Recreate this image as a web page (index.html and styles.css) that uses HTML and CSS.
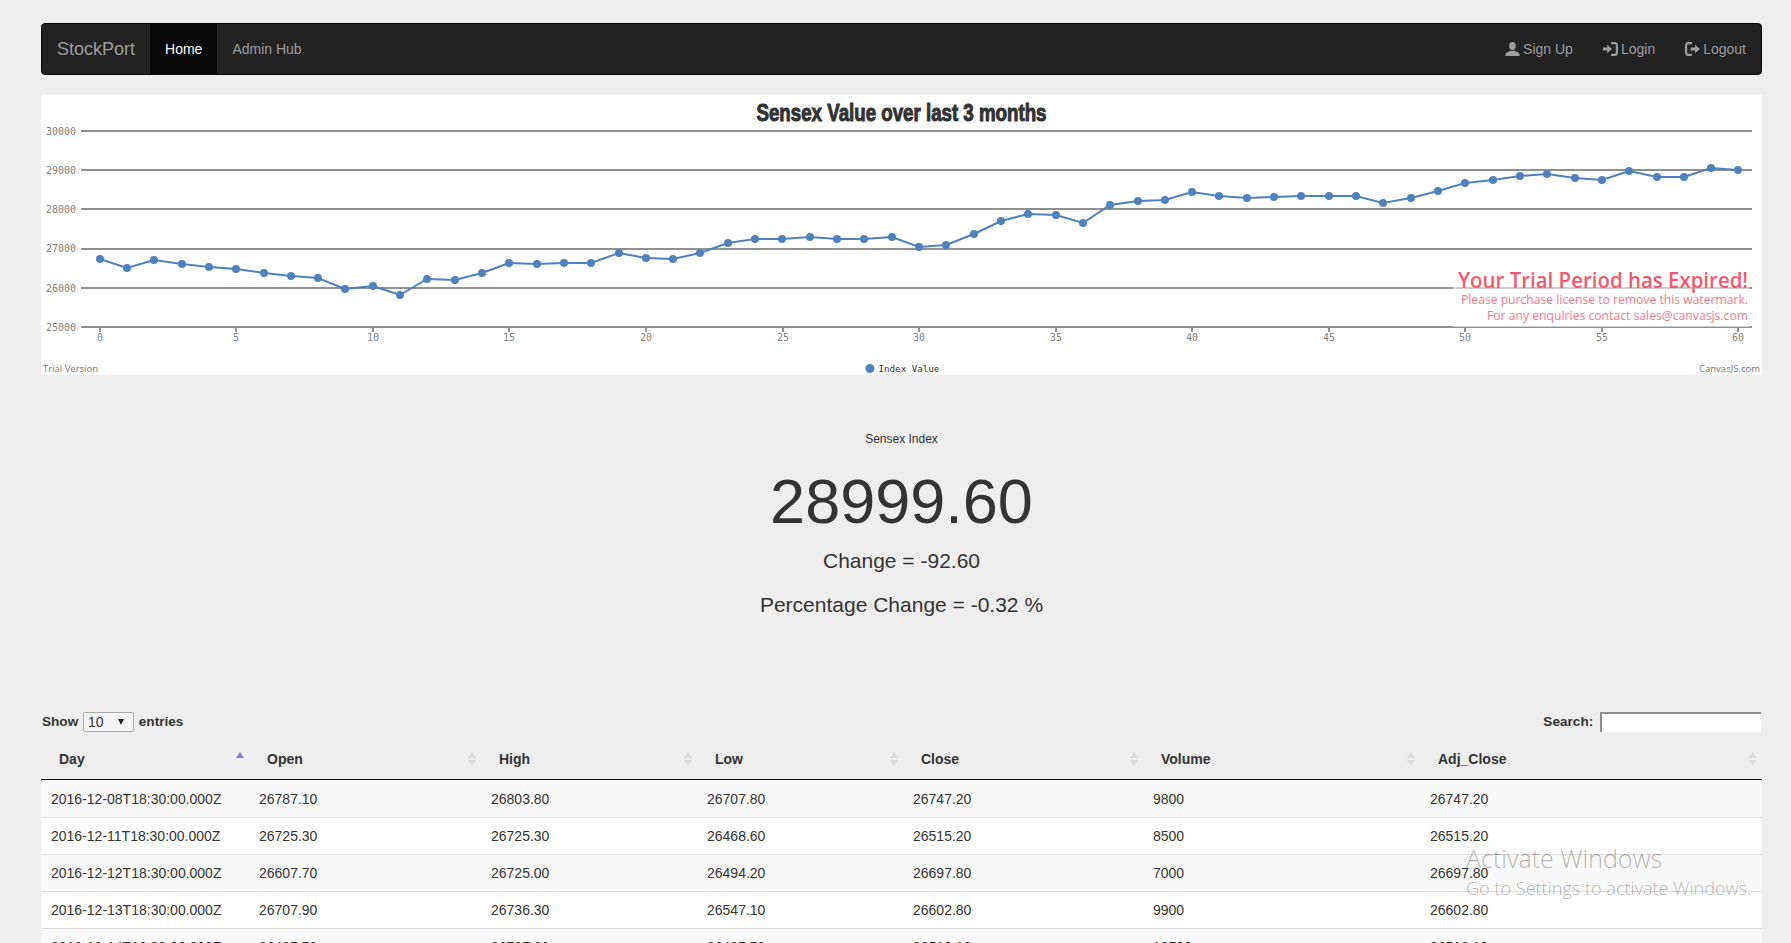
FILE: index.html
```html
<!DOCTYPE html>
<html lang="en">
<head>
    <meta charset="UTF-8">
    <meta name="viewport" content="width=device-width, initial-scale=1.0">
    <title>StockPort</title>
    <link rel="stylesheet" href="styles.css">
</head>
<body>
    <nav class="navbar">
        <a class="brand">StockPort</a>
        <ul class="nav">
            <li><a class="active">Home</a></li>
            <li><a>Admin Hub</a></li>
        </ul>
        <ul class="nav nav-right">
            <li><a><svg class="icon" viewBox="0 0 15 14"><ellipse cx="7.5" cy="4" rx="3.3" ry="4"/><path d="M0.5 14v-1.6c0-2.2 3.6-2.4 4.8-3.6h4.4c1.2 1.2 4.8 1.4 4.8 3.6V14z"/></svg>Sign Up</a></li>
            <li><a><svg class="icon" viewBox="0 0 15 14"><path d="M0 5.4h4.2V2.8L9 7l-4.8 4.2V8.6H0z"/><path class="icon-line" d="M8 1.2h3.5c1.5 0 2.4.9 2.4 2.4v6.8c0 1.5-.9 2.4-2.4 2.4H8"/></svg>Login</a></li>
            <li><a><svg class="icon" viewBox="0 0 15 14"><path class="icon-line" d="M7 1.2H3.5C2 1.2 1.1 2.1 1.1 3.6v6.8c0 1.5.9 2.4 2.4 2.4H7"/><path d="M5.5 5.4H10V2.8L15 7l-5 4.2V8.6H5.5z"/></svg>Logout</a></li>
        </ul>
    </nav>

    <!-- chart, drawn in page coordinates -->
    <div class="chart">
        <svg viewBox="41 95 1721 280" width="1721" height="280">
            <text class="chart-title" x="901.5" y="121" text-anchor="middle" textLength="290" lengthAdjust="spacingAndGlyphs">Sensex Value over last 3 months</text>

            <g class="grid">
                <line x1="81" y1="131" x2="1752" y2="131"/>
                <line x1="81" y1="170" x2="1752" y2="170"/>
                <line x1="81" y1="209" x2="1752" y2="209"/>
                <line x1="81" y1="249" x2="1752" y2="249"/>
                <line x1="81" y1="288" x2="1752" y2="288"/>
                <line x1="81" y1="327" x2="1752" y2="327"/>
            </g>
            <g class="grid ticks">
                <line x1="100" y1="327" x2="100" y2="332"/>
                <line x1="236" y1="327" x2="236" y2="332"/>
                <line x1="373" y1="327" x2="373" y2="332"/>
                <line x1="509" y1="327" x2="509" y2="332"/>
                <line x1="646" y1="327" x2="646" y2="332"/>
                <line x1="783" y1="327" x2="783" y2="332"/>
                <line x1="919" y1="327" x2="919" y2="332"/>
                <line x1="1056" y1="327" x2="1056" y2="332"/>
                <line x1="1192" y1="327" x2="1192" y2="332"/>
                <line x1="1329" y1="327" x2="1329" y2="332"/>
                <line x1="1465" y1="327" x2="1465" y2="332"/>
                <line x1="1602" y1="327" x2="1602" y2="332"/>
                <line x1="1738" y1="327" x2="1738" y2="332"/>
            </g>

            <g class="axis-label" text-anchor="end">
                <text x="76" y="134.5">30000</text>
                <text x="76" y="173.5">29000</text>
                <text x="76" y="212.5">28000</text>
                <text x="76" y="252">27000</text>
                <text x="76" y="291.5">26000</text>
                <text x="76" y="330.5">25000</text>
            </g>
            <g class="axis-label" text-anchor="middle">
                <text x="100" y="341">0</text>
                <text x="236" y="341">5</text>
                <text x="373" y="341">10</text>
                <text x="509" y="341">15</text>
                <text x="646" y="341">20</text>
                <text x="783" y="341">25</text>
                <text x="919" y="341">30</text>
                <text x="1056" y="341">35</text>
                <text x="1192" y="341">40</text>
                <text x="1329" y="341">45</text>
                <text x="1465" y="341">50</text>
                <text x="1602" y="341">55</text>
                <text x="1738" y="341">60</text>
            </g>

            <polyline class="series" points="100,259 127,268 154,260 182,264 209,267 236,269 264,273 291,276 318,278 345,289 373,286 400,295 427,279 455,280 482,273 509,263 537,264 564,263 591,263 619,253 646,258 673,259 700,253 728,243 755,239 782,239 810,237 837,239 864,239 892,237 919,247 946,245 974,234 1001,221 1028,214 1056,215 1083,223 1110,205 1138,201 1165,200 1192,192 1219,196 1247,198 1274,197 1301,196 1329,196 1356,196 1383,203 1411,198 1438,191 1465,183 1493,180 1520,176 1547,174 1575,178 1602,180 1629,171 1657,177 1684,177 1711,168 1738,170"/>
            <path class="markers" d="M100 259h0M127 268h0M154 260h0M182 264h0M209 267h0M236 269h0M264 273h0M291 276h0M318 278h0M345 289h0M373 286h0M400 295h0M427 279h0M455 280h0M482 273h0M509 263h0M537 264h0M564 263h0M591 263h0M619 253h0M646 258h0M673 259h0M700 253h0M728 243h0M755 239h0M782 239h0M810 237h0M837 239h0M864 239h0M892 237h0M919 247h0M946 245h0M974 234h0M1001 221h0M1028 214h0M1056 215h0M1083 223h0M1110 205h0M1138 201h0M1165 200h0M1192 192h0M1219 196h0M1247 198h0M1274 197h0M1301 196h0M1329 196h0M1356 196h0M1383 203h0M1411 198h0M1438 191h0M1465 183h0M1493 180h0M1520 176h0M1547 174h0M1575 178h0M1602 180h0M1629 171h0M1657 177h0M1684 177h0M1711 168h0M1738 170h0"/>

            <rect class="wm-back" x="1453" y="262" width="297" height="65"/>
            <g class="wm" text-anchor="end">
                <text class="wm-head" x="1748" y="288" textLength="290" lengthAdjust="spacingAndGlyphs">Your Trial Period has Expired!</text>
                <text x="1748" y="304" textLength="287" lengthAdjust="spacingAndGlyphs">Please purchase license to remove this watermark.</text>
                <text x="1748" y="320" textLength="261" lengthAdjust="spacingAndGlyphs">For any enquiries contact sales@canvasjs.com</text>
            </g>

            <text class="credit" x="43" y="372">Trial Version</text>
            <text class="credit" x="1760" y="372" text-anchor="end">CanvasJS.com</text>
            <circle class="legend-dot" cx="870" cy="368.5" r="4.5"/>
            <text class="legend" x="878.5" y="371.5">Index Value</text>
        </svg>
    </div>

    <div class="stats">
        <div class="stats-label">Sensex Index</div>
        <div class="stats-value">28999.60</div>
        <div class="stats-line">Change = -92.60</div>
        <div class="stats-line stats-pct">Percentage Change = -0.32 %</div>
    </div>

    <div class="table-tools">
        <label>Show <span class="select-wrap"><select><option>10</option></select></span> entries</label>
        <label>Search: <input type="text"></label>
    </div>
    <table class="stock-table">
        <colgroup>
            <col class="c-day"><col class="c-open"><col class="c-high"><col class="c-low"><col class="c-close"><col class="c-vol"><col class="c-adj">
        </colgroup>
        <thead>
            <tr>
                <th class="sort-asc">Day</th>
                <th>Open</th>
                <th>High</th>
                <th>Low</th>
                <th>Close</th>
                <th>Volume</th>
                <th>Adj_Close</th>
            </tr>
        </thead>
        <tbody>
            <tr><td>2016-12-08T18:30:00.000Z</td><td>26787.10</td><td>26803.80</td><td>26707.80</td><td>26747.20</td><td>9800</td><td>26747.20</td></tr>
            <tr><td>2016-12-11T18:30:00.000Z</td><td>26725.30</td><td>26725.30</td><td>26468.60</td><td>26515.20</td><td>8500</td><td>26515.20</td></tr>
            <tr><td>2016-12-12T18:30:00.000Z</td><td>26607.70</td><td>26725.00</td><td>26494.20</td><td>26697.80</td><td>7000</td><td>26697.80</td></tr>
            <tr><td>2016-12-13T18:30:00.000Z</td><td>26707.90</td><td>26736.30</td><td>26547.10</td><td>26602.80</td><td>9900</td><td>26602.80</td></tr>
            <tr><td>2016-12-14T18:30:00.000Z</td><td>26497.70</td><td>26707.60</td><td>26497.70</td><td>26519.10</td><td>10700</td><td>26519.10</td></tr>
        </tbody>
    </table>

    <div class="activate">
        <div class="activate-head">Activate Windows</div>
        <div class="activate-sub">Go to Settings to activate Windows.</div>
    </div>
</body>
</html>
```

FILE: styles.css
```css
html, body {
    height: 943px;
    overflow: hidden;
}

body {
    margin: 0;
    padding: 23px 29px 0 41px;
    box-sizing: border-box;
    position: relative;
    background: #eeeeee;
    color: #333;
    font-family: "Liberation Sans", Arial, sans-serif;
    font-size: 14px;
    line-height: 20px;
}

/* Navbar */
.navbar {
    display: flex;
    height: 52px;
    box-sizing: border-box;
    margin-bottom: 20px;
    background: #222;
    border: 1px solid #080808;
    border-radius: 4px;
}

.brand {
    padding: 15px;
    font-size: 18px;
    color: #9d9d9d;
}

.nav {
    display: flex;
    margin: 0;
    padding: 0;
    list-style: none;
}

.nav-right {
    margin-left: auto;
}

.nav a {
    display: block;
    height: 50px;
    box-sizing: border-box;
    padding: 15px;
    color: #9d9d9d;
}

.nav a.active {
    background: #080808;
    color: #fff;
}

.icon {
    width: 15px;
    height: 14px;
    margin-right: 3px;
    vertical-align: -2px;
    fill: #9d9d9d;
}

.icon-line {
    fill: none;
    stroke: #9d9d9d;
    stroke-width: 2.2;
}

/* Chart */
.chart {
    height: 280px;
    background: #fff;
}

.chart svg {
    display: block;
}

.chart-title {
    font-family: "Liberation Sans Narrow", "Liberation Sans", sans-serif;
    font-size: 23px;
    font-weight: bold;
    fill: #333;
    stroke: #333;
    stroke-width: 1;
}

.grid line {
    stroke: #909090;
    stroke-width: 2;
}

.axis-label {
    font-family: "DejaVu Sans Mono", monospace;
    font-size: 10px;
    fill: #808080;
}

.series {
    fill: none;
    stroke: #4f81bc;
    stroke-width: 2;
}

.markers {
    fill: none;
    stroke: #4f81bc;
    stroke-width: 8;
    stroke-linecap: round;
}

.wm-back {
    fill: rgba(255, 255, 255, 0.55);
}

.wm {
    font-family: "Open Sans", sans-serif;
    font-size: 12px;
    fill: #f4788a;
}

.wm-head {
    font-size: 21px;
    font-weight: 600;
    fill: #f05a70;
}

.credit {
    font-family: "Open Sans", sans-serif;
    font-size: 9.5px;
    fill: #777;
}

.legend-dot {
    fill: #4f81bc;
}

.legend {
    font-family: "DejaVu Sans Mono", monospace;
    font-size: 9.2px;
    fill: #333;
}

/* Index figures */
.stats {
    margin-top: 56px;
    text-align: center;
}

.stats-label {
    font-size: 12px;
    line-height: 17px;
}

.stats-value {
    margin-top: 19px;
    font-size: 63px;
    line-height: 68px;
}

.stats-line {
    margin-top: 12px;
    font-size: 21px;
    line-height: 28px;
}

.stats-pct {
    margin-top: 16px;
}

/* Table */
.table-tools {
    display: flex;
    justify-content: space-between;
    height: 20px;
    margin-top: 93px;
    padding: 0 1px;
    margin-bottom: 7px;
    font-weight: bold;
    font-size: 13.6px;
}

.select-wrap {
    position: relative;
    display: inline-block;
    vertical-align: top;
}

.select-wrap::after {
    content: "";
    position: absolute;
    left: 36px;
    top: 7px;
    border-left: 3.5px solid transparent;
    border-right: 3.5px solid transparent;
    border-top: 6px solid #222;
}

.table-tools select {
    appearance: none;
    display: block;
    width: 51px;
    height: 20px;
    margin: 0 1px;
    padding: 0 0 0 4px;
    box-sizing: border-box;
    background: #f4f4f4;
    border: 1px solid #a9a9a9;
    border-radius: 2px;
    color: #333;
    font-family: "Liberation Sans", Arial, sans-serif;
    font-size: 14px;
}

.table-tools input {
    width: 161px;
    height: 20px;
    margin-left: 3px;
    padding: 0;
    box-sizing: border-box;
    background: #fff;
    border: 0 solid #8f8f8f;
    border-top-width: 2px;
    border-left-width: 2px;
    vertical-align: top;
}

.stock-table {
    width: 100%;
    table-layout: fixed;
    border-collapse: separate;
    border-spacing: 0;
}

.c-day { width: 208px; }
.c-open { width: 232px; }
.c-high { width: 216px; }
.c-low { width: 206px; }
.c-close { width: 240px; }
.c-vol { width: 277px; }
.c-adj { width: 342px; }

.stock-table th {
    position: relative;
    padding: 10px 18px;
    border-bottom: 1px solid #111;
    text-align: left;
}

/* sort arrows */
.stock-table th::before,
.stock-table th::after {
    content: "";
    position: absolute;
    right: 5px;
    border-left: 4px solid transparent;
    border-right: 4px solid transparent;
}

.stock-table th::before {
    top: 13px;
    border-bottom: 6px solid #dcdcdc;
}

.stock-table th::after {
    top: 21px;
    border-top: 6px solid #dcdcdc;
}

.stock-table th.sort-asc::before {
    border-bottom-color: #7c7cd8;
}

.stock-table th.sort-asc::after {
    display: none;
}

.stock-table td {
    padding: 8px 10px;
    border-top: 1px solid #ddd;
    background: #fff;
}

.stock-table tbody tr:nth-child(odd) td {
    background: #f9f9f9;
}

.stock-table tbody tr:first-child td {
    border-top-color: #f9f9f9;
}

/* Windows watermark */
.activate {
    position: absolute;
    left: 1466px;
    top: 840px;
    font-family: "Open Sans", sans-serif;
    font-weight: 300;
    color: rgba(0, 0, 0, 0.3);
    white-space: nowrap;
}

.activate-head {
    font-size: 25px;
    line-height: 36px;
}

.activate-sub {
    font-size: 18.1px;
    line-height: 24px;
}
```
